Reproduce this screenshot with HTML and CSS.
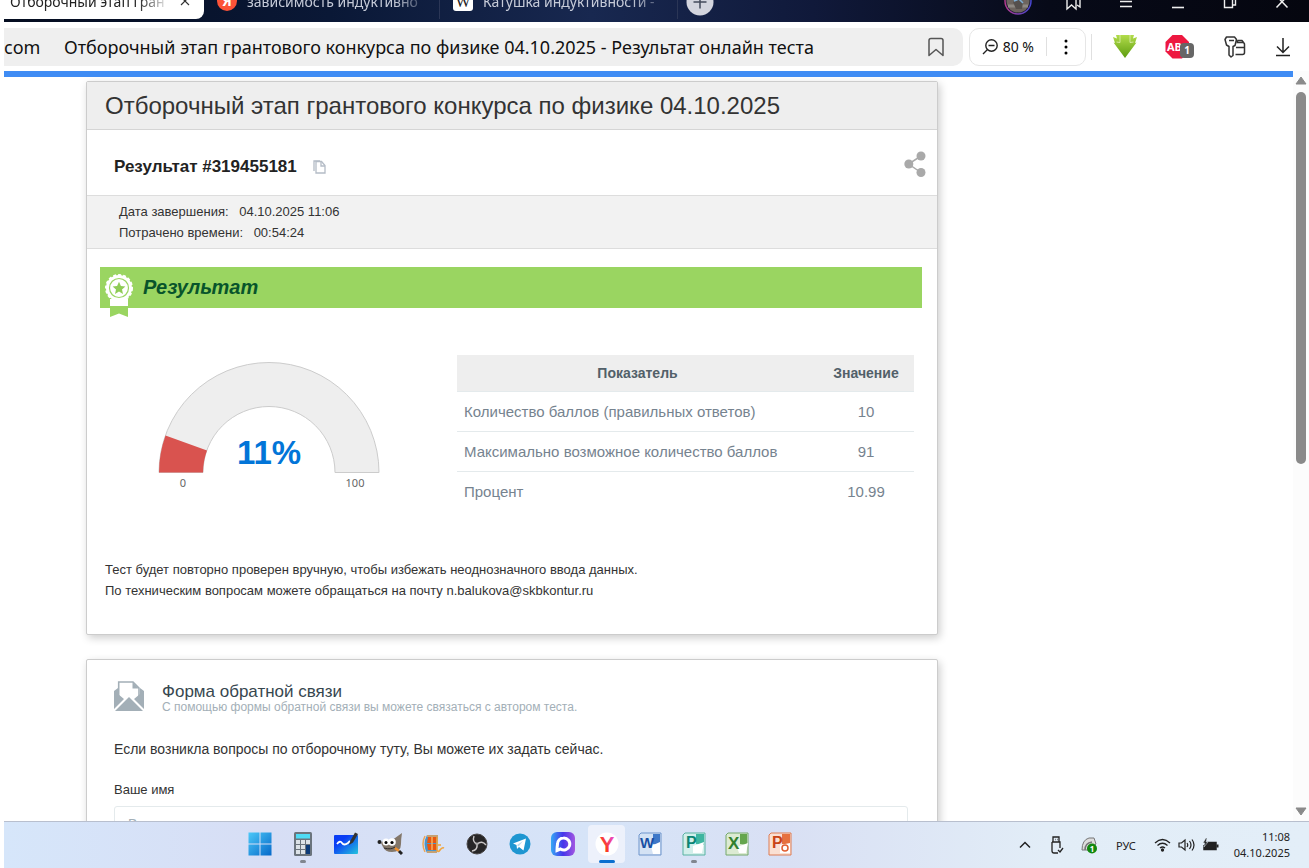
FILE: index.html
```html
<!DOCTYPE html>
<html lang="ru">
<head>
  <meta charset="UTF-8" />
  <meta name="viewport" content="width=device-width, initial-scale=1.0"/>
  <title>Отборочный этап грантового конкурса по физике 04.10.2025</title>
  <link rel="stylesheet" href="styles.css">
</head>
<body>
  <div class="screen">

    <!-- browser tabs -->
    <header class="tabs">
      <div class="tab active"><span class="tab-title">Отборочный этап гран</span>
        <button class="tab-close" aria-label="Закрыть вкладку"><svg width="10" height="10" viewBox="0 0 10 10"><path d="M1 1l8 8M9 1l-8 8" stroke="#333" stroke-width="1.2"/></svg></button>
      </div>
      <div class="tab second">
        <svg width="20" height="20" viewBox="0 0 20 20"><circle cx="10" cy="10" r="10" fill="#fc5338"/><text x="10" y="15" text-anchor="middle" font-size="14" font-weight="bold" fill="#fff">Я</text></svg>
        <span class="tab-title">зависимость индуктивно</span>
      </div>
      <div class="tab third">
        <svg width="20" height="20" viewBox="0 0 20 20"><rect width="20" height="20" rx="3" fill="#fff"/><text x="10" y="16" text-anchor="middle" font-size="16" font-family="Liberation Serif, serif" fill="#222">W</text></svg>
        <span class="tab-title">Катушка индуктивности -</span>
      </div>
      <button class="new-tab" aria-label="Новая вкладка"><svg width="28" height="28" viewBox="0 0 28 28"><circle cx="14" cy="14" r="13.500" fill="#d3d5de"/><path d="M14 7.500v13M7.500 14h13" stroke="#444b5c" stroke-width="1.500"/></svg></button>
      <div class="window-buttons">
        <button aria-label="Профиль"><svg width="28" height="28" viewBox="0 0 28 28"><defs><linearGradient id="ring" x1="0" x2="1"><stop offset="0" stop-color="#b13a8c"/><stop offset="1" stop-color="#4746d0"/></linearGradient></defs><circle cx="14" cy="14" r="13" fill="#15172a" stroke="url(#ring)" stroke-width="1.500"/><circle cx="14" cy="14" r="11.500" fill="#6d655f"/><path d="M4 9h20M4 19h20" stroke="#8e8983" stroke-width="3"/><path d="M9 15l5-3 5 3-1 7h-6" fill="#55504d"/><path d="M10 14l5-2 4 4" stroke="#7db0d8" stroke-width="1.500" fill="none"/></svg></button>
        <button aria-label="Коллекции"><svg width="20" height="20" viewBox="0 0 20 20" fill="none" stroke="#eee" stroke-width="1.400"><path d="M3 3h9v15l-4.500-4L3 18z"/><path d="M12 2h4v14l-3-2"/></svg></button>
        <button aria-label="Меню"><svg width="20" height="20" viewBox="0 0 20 20" stroke="#eee" stroke-width="1.400"><path d="M4 5.500h12M4 10.500h12M4 15.500h12"/></svg></button>
        <button aria-label="Свернуть"><svg width="20" height="20" viewBox="0 0 20 20" stroke="#eee" stroke-width="1.600"><path d="M4 16.500h12"/></svg></button>
        <button aria-label="Развернуть"><svg width="20" height="20" viewBox="0 0 20 20" fill="none" stroke="#eee" stroke-width="1.400"><path d="M4.500 7h8v9.500h-8z"/><path d="M7 4.500h8.500V14H13"/></svg></button>
        <button aria-label="Закрыть"><svg width="20" height="20" viewBox="0 0 20 20" stroke="#eee" stroke-width="1.500"><path d="M4.500 5l11 11.500M15.500 5l-11 11.500"/></svg></button>
      </div>
    </header>

    <!-- address bar -->
    <nav class="toolbar">
      <div class="address">
        <span class="host">com</span>
        <span class="page-name">Отборочный этап грантового конкурса по физике 04.10.2025 - Результат онлайн теста</span>
        <button class="bookmark" aria-label="Закладка"><svg width="18" height="20" viewBox="0 0 18 20"><path d="M4 1.500h10q2 0 2 2v15l-7-6-7 6v-15q0-2 2-2z" fill="none" stroke="#555" stroke-width="1.500" stroke-linejoin="round"/></svg></button>
      </div>
      <div class="zoom-box">
        <button class="zoom-level"><svg width="16" height="16" viewBox="0 0 16 16" fill="none" stroke="#222" stroke-width="1.400"><circle cx="9.500" cy="6.500" r="5.700"/><path d="M5.500 10.500L1 15M6.500 6.500h6"/></svg>80 %</button>
        <button class="dots" aria-label="Ещё"><svg width="4" height="16" viewBox="0 0 4 16"><circle cx="2" cy="2" r="1.500"/><circle cx="2" cy="8" r="1.500"/><circle cx="2" cy="14" r="1.500"/></svg></button>
      </div>
      <div class="extensions">
        <button aria-label="Загрузчик"><svg width="24" height="26" viewBox="0 0 24 26"><defs><linearGradient id="green" x1="0" x2="0" y1="0" y2="1"><stop offset="0" stop-color="#b2dc4a"/><stop offset="1" stop-color="#5d9c10"/></linearGradient></defs><path d="M3 1h18l-1 3.500L24 3l-2 6 1.500-.5L12 24 .5 8.500 2 9 0 3l4 1.500z" fill="url(#green)"/><path d="M7 1v7.500L3.500 8M17 1v7.500l3.500-.5" fill="none" stroke="#dff0b8" stroke-width=".8"/></svg></button>
        <button aria-label="Блокировщик"><svg width="30" height="26" viewBox="0 0 30 26"><path d="M7.500 1h9.500l7 7v9.500l-7 7H7.500l-7-7V8z" fill="#ed1840"/><text x="2" y="17" font-size="11" font-weight="bold" fill="#fff">AB</text><rect x="15" y="9" width="14" height="15" rx="4" fill="#666"/><text x="22" y="20" text-anchor="middle" font-size="10" font-weight="bold" fill="#fff">1</text></svg></button>
        <button aria-label="Пароли"><svg width="22" height="22" viewBox="0 0 22 22" fill="none" stroke="#333" stroke-width="1.500" stroke-linejoin="round"><path d="M2.500 1h8l2 2.500-1.500 6-2 1v9l-2 1.500-2-2v-8.500L2.500 9 1 3.500z"/><path d="M5 4.500h5" /><path d="M12.500 6.500h6q2 0 2 2v8q0 2-2 2h-7M12 11.500h8.500M12.500 6.500l1.500-2h4l1.500 2"/></svg></button>
        <button aria-label="Загрузки"><svg width="18" height="20" viewBox="0 0 18 20" fill="none" stroke="#222" stroke-width="1.500"><path d="M9 1v14M3 9.500l6 6 6-6M2 18.500h14"/></svg></button>
      </div>
    </nav>

    <div class="viewport">
      <main class="page">
        <section class="card">
          <h1>Отборочный этап грантового конкурса по физике 04.10.2025</h1>
          <div class="result-head">
            <h2>Результат #319455181</h2>
            <button aria-label="Скопировать"><svg width="13" height="14" viewBox="0 0 13 14" fill="none" stroke="#b4bcc6" stroke-width="1.300"><path d="M1 11V1h6"/><path d="M3 1.500h5.500l3.500 4v7.500H3z"/><path d="M8 1.500v4.500h4"/></svg></button>
            <button class="share" aria-label="Поделиться"><svg width="22" height="26" viewBox="0 0 22 26"><path d="M17 5L4.500 13 17 21.500" fill="none" stroke="#aaa" stroke-width="1.500"/><g fill="#a9a9a9"><circle cx="17" cy="5" r="4.500"/><circle cx="4.800" cy="13" r="4.500"/><circle cx="17" cy="21.500" r="4.500"/></g></svg></button>
          </div>
          <div class="meta">
            <div>Дата завершения: <span>04.10.2025 11:06</span></div>
            <div>Потрачено времени: <span>00:54:24</span></div>
          </div>

          <div class="banner">
            <svg class="medal" width="28" height="44" viewBox="0 0 28 44">
              <path d="M5 25h18v7H5z" fill="#fff"/>
              <path d="M5 34h18v9l-9-3.500L5 43z" fill="#9ad561"/>
              <circle cx="14" cy="14" r="13" fill="#fff"/>
              <circle cx="14" cy="14" r="13" fill="none" stroke="#fff" stroke-width="2" stroke-dasharray="3 2"/>
              <circle cx="14" cy="14" r="9.500" fill="none" stroke="#9ad561" stroke-width="1.200"/>
              <path d="M14 7.800l1.900 4.100 4.500.5-3.400 3 1 4.500-4-2.300-4 2.300 1-4.500-3.400-3 4.500-.5z" fill="#8fcc55"/>
            </svg>
            <h3>Результат</h3>
          </div>

          <div class="summary">
            <svg class="gauge" width="222" height="130" viewBox="0 0 222 130">
              <path d="M1 110.500A110 110 0 0 1 221 110.500H177A66 66 0 0 0 45 110.500z" fill="#eee" stroke="#ccc"/>
              <path d="M1 110.500A110 110 0 0 1 7.500 73.500L49 88.400A66 66 0 0 0 45 110.500z" fill="#d9534f"/>
              <text class="gauge-value" x="111" y="102" text-anchor="middle">11%</text>
              <text class="gauge-label" x="25" y="125" text-anchor="middle">0</text>
              <text class="gauge-label" x="197" y="125" text-anchor="middle">100</text>
            </svg>
            <table>
              <thead>
                <tr><th>Показатель</th><th class="value">Значение</th></tr>
              </thead>
              <tbody>
                <tr><td>Количество баллов (правильных ответов)</td><td class="value">10</td></tr>
                <tr><td>Максимально возможное количество баллов</td><td class="value">91</td></tr>
                <tr><td>Процент</td><td class="value">10.99</td></tr>
              </tbody>
            </table>
          </div>

          <p class="note">Тест будет повторно проверен вручную, чтобы избежать неоднозначного ввода данных.<br>
          По техническим вопросам можете обращаться на почту n.balukova@skbkontur.ru</p>
        </section>

        <section class="card feedback">
          <div class="feedback-head">
            <svg width="30" height="30" viewBox="0 0 30 30" fill="#a3afb7"><path d="M0 10l4-3v6l6 5L0 28zM30 10l-4-3v6l-6 5 10 10z"/><path d="M1 30l14-14 14 14z"/><path d="M4.700 15V1H19l6 6v8" fill="none" stroke="#a3afb7" stroke-width="1.600"/><path d="M18.500 1v6.500H25z"/></svg>
            <div>
              <h2>Форма обратной связи</h2>
              <p>С помощью формы обратной связи вы можете связаться с автором теста.</p>
            </div>
          </div>
          <p class="question">Если возникла вопросы по отборочному туту, Вы можете их задать сейчас.</p>
          <label for="name">Ваше имя</label>
          <input id="name" type="text" placeholder="Ваше имя">
        </section>
      </main>
      <div class="scrollbar">
        <svg width="12" height="9" viewBox="0 0 12 9"><path d="M6 1l5 7H1z" fill="#8a8a8a" stroke="#8a8a8a" stroke-linejoin="round"/></svg>
        <div class="track"><div class="thumb"></div></div>
        <svg width="12" height="9" viewBox="0 0 12 9"><path d="M6 8L1 1h10z" fill="#8a8a8a" stroke="#8a8a8a" stroke-linejoin="round"/></svg>
      </div>
    </div>

    <!-- windows taskbar -->
    <footer class="taskbar">
      <div class="apps">
        <button aria-label="Пуск"><svg width="24" height="24" viewBox="0 0 24 24"><defs><linearGradient id="win" x1="0" y1="0" x2="1" y2="1"><stop offset="0" stop-color="#4cc8f8"/><stop offset="1" stop-color="#0669c9"/></linearGradient></defs><path d="M.5.5h11v11H.5zM12.500.5h11v11h-11zM.5 12.500h11v11H.5zM12.500 12.500h11v11h-11z" fill="url(#win)"/></svg></button>
        <button class="running" aria-label="Калькулятор"><svg width="24" height="24" viewBox="0 0 24 24"><rect x="3" y="0" width="18" height="24" rx="1.500" fill="#6b747d"/><rect x="5" y="2" width="14" height="4.500" fill="#4fdcf5"/><g fill="#dce2e7"><path d="M5 8h4v4H5zM10 8h4v4h-4zM15 8h4v4h-4zM5 13h4v4H5zM10 13h4v4h-4zM5 18h4v4H5zM10 18h4v4h-4z"/></g><path d="M15 13h4v9h-4z" fill="#0d3b78"/></svg></button>
        <button aria-label="Доска"><svg width="26" height="24" viewBox="0 0 26 24"><defs><linearGradient id="board" x1="0" y1="0" x2="1" y2="1"><stop offset=".3" stop-color="#0a3df5"/><stop offset="1" stop-color="#24c4dd"/></linearGradient></defs><rect x="1" y="3" width="24" height="19" rx="1" fill="url(#board)"/><path d="M4 12q3-4 5-1t6 0l2-2" fill="none" stroke="#fff" stroke-width="1.800"/><path d="M16 13l1.500-4.500L22 .5l3 1.500-5 8.500z" fill="#333"/></svg></button>
        <button aria-label="GIMP"><svg width="26" height="24" viewBox="0 0 26 24"><path d="M4 11l2-2 5 1q3-1 7-4l7-5q-1 6-1 11 0 8-9 8-7 0-9-5z" fill="#83776a"/><circle cx="2.500" cy="10" r="2" fill="#222"/><circle cx="9" cy="10" r="3.500" fill="#fff"/><circle cx="15" cy="10" r="3.800" fill="#fff"/><circle cx="9" cy="10.500" r="1.500"/><circle cx="15" cy="10.500" r="1.600"/><path d="M7 16q7 2 11-1" stroke="#332e2b" fill="none"/><path d="M18 16l4 3" stroke="#f0902c" stroke-width="2.500"/><path d="M22 19l3 3" stroke="#222" stroke-width="3"/></svg></button>
        <button aria-label="Видео"><svg width="24" height="24" viewBox="0 0 24 24"><path d="M6 3h11l-1 18H6Q1 12 6 3z" fill="#4b95c9"/><path d="M4 4q-4 8 0 16M6 4h11M6 20h10" stroke="#efa556" stroke-width="1.500" fill="none"/><path d="M7 5h9l-1 6H6zM6 12h9l1 6H7z" fill="#e8560f"/><path d="M11 5v13" stroke="#f7b060" stroke-width="1.500"/><path d="M16 5v13q1 3 3 0t4-2M17 13h3" fill="none" stroke="#f1a43a" stroke-width="1.600"/></svg></button>
        <button aria-label="OBS"><svg width="22" height="22" viewBox="0 0 22 22"><circle cx="11" cy="11" r="10" fill="#272627" stroke="#4b4848"/><g fill="none" stroke="#c9c6c6" stroke-width="1.400"><path d="M11 11Q6 9 8 3M11 11q5-4 9 1M11 11q1 6-5 7"/></g><circle cx="11" cy="11" r="1.500" fill="#aaa"/></svg></button>
        <button aria-label="Telegram"><svg width="22" height="22" viewBox="0 0 22 22"><circle cx="11" cy="11" r="10.500" fill="#1e96d1"/><path d="M4 10.500L17 5.500l-2.500 12-4.500-3.500-2 2-.5-4z" fill="#fff"/><path d="M8 12l6-4-4.500 5.500" fill="#b9dcef"/></svg></button>
        <button aria-label="Max"><svg width="24" height="24" viewBox="0 0 24 24"><defs><linearGradient id="max" x1="0" x2="1"><stop offset="0" stop-color="#35a8f5"/><stop offset=".5" stop-color="#4535ea"/><stop offset="1" stop-color="#a357e1"/></linearGradient></defs><rect width="24" height="24" rx="6" fill="url(#max)"/><path d="M12.500 6a6 6 0 1 1-3 11l-3.500 1.500q0-3 .5-6.500a6 6 0 0 1 6-6z" fill="none" stroke="#fff" stroke-width="3"/></svg></button>
        <button class="current" aria-label="Яндекс Браузер"><svg width="24" height="24" viewBox="0 0 24 24"><defs><linearGradient id="yb" x1="0" x2="1" y1="1" y2="0"><stop offset=".4" stop-color="#fb3b25"/><stop offset=".9" stop-color="#e64be0"/></linearGradient></defs><circle cx="12" cy="12" r="11.500" fill="#fff"/><text x="12" y="20" text-anchor="middle" font-size="22" font-weight="bold" fill="url(#yb)">Y</text></svg></button>
        <button aria-label="Word"><svg width="24" height="24" viewBox="0 0 24 24"><path d="M3 1h20v22H1V3z" fill="#d4e2f4" stroke="#6f95cc"/><path d="M15 2h7v11l-7-1z" fill="#3f78c8"/><path d="M13 14l9-4v12h-7z" fill="#fff"/><text x="2" y="16" font-size="15" font-weight="bold" fill="#184fa3">W</text></svg></button>
        <button class="running" aria-label="Publisher"><svg width="24" height="24" viewBox="0 0 24 24"><path d="M3 1h20v22H1V3z" fill="#d3efeb" stroke="#59b3a3"/><path d="M14 2h8v11l-8-1z" fill="#3eb5a0"/><path d="M11 14l11-4-2 11h-9z" fill="#fff"/><text x="4" y="16" font-size="16" font-weight="bold" fill="#0b8574">P</text></svg></button>
        <button aria-label="Excel"><svg width="24" height="24" viewBox="0 0 24 24"><path d="M3 1h20v22H1V3z" fill="#dcebd3" stroke="#74a86c"/><path d="M15 2h7v11l-7-1z" fill="#65a64e"/><path d="M12 15l11-4-2 10h-7z" fill="#fff"/><text x="3" y="17" font-size="17" font-weight="bold" fill="#31802d">X</text></svg></button>
        <button aria-label="PowerPoint"><svg width="24" height="24" viewBox="0 0 24 24"><path d="M3 1h20v22H1V3z" fill="#fae0d3" stroke="#dd7c55"/><path d="M14 2h8v11l-8-1z" fill="#e6713f"/><path d="M12 13l10-2v10H12z" fill="#fff"/><circle cx="17" cy="16" r="3" fill="none" stroke="#e05f32" stroke-width="1.500"/><text x="4" y="16" font-size="16" font-weight="bold" fill="#c84415">P</text></svg></button>
      </div>
      <div class="tray">
        <button class="chevron" aria-label="Скрытые значки"><svg width="12" height="8" viewBox="0 0 12 8"><path d="M1 6.500l5-5 5 5" fill="none" stroke="#222" stroke-width="1.500"/></svg></button>
        <svg class="usb" width="14" height="18" viewBox="0 0 14 18" fill="none" stroke="#222" stroke-width="1.300"><path d="M3 6V1h6v5M2 6h8v6M8 17H4q-2 0-2-2V6"/><path d="M5 3.500h.5M7 3.500h.5M8 14l2 2 3-4"/></svg>
        <svg width="17" height="17" viewBox="0 0 17 17"><path d="M1 13Q1 3 8 1h5l2 6-7 6z" fill="#ddd" stroke="#777"/><path d="M4 13q0-7 7-8" stroke="#777" fill="none" stroke-width="1.500"/><circle cx="11" cy="11.500" r="5" fill="#11880e"/><text x="11" y="15" text-anchor="middle" font-size="8" font-weight="bold" fill="#fff">1</text></svg>
        <span class="lang">РУС</span>
        <svg width="17" height="14" viewBox="0 0 17 14" fill="none" stroke="#222" stroke-width="1.300"><path d="M1 5q7.500-7 15 0M3.500 7.500q5-4.500 10 0M6 10q2.500-2 5 0"/><circle cx="8.500" cy="12" r="1" fill="#222"/></svg>
        <svg width="17" height="14" viewBox="0 0 17 14" fill="none" stroke="#222" stroke-width="1.200"><path d="M1 5h2.500L7 2v10L3.500 9H1zM9 5q1.500 2 0 4M11.500 3q3 4 0 8M14 1.500q4 5.500 0 11"/></svg>
        <svg width="17" height="14" viewBox="0 0 17 14"><path d="M3 4.500h11v7H2V7" fill="#222" stroke="#222" stroke-width="1.500"/><path d="M15.500 6.500v3" stroke="#222" stroke-width="2"/><path d="M4 0L1 5h2L2 9l4-5H4l1-4z" fill="#222" stroke="#e3edf7" stroke-width=".5"/></svg>
        <div class="clock">11:08<br>04.10.2025</div>
      </div>
    </footer>
  </div>
</body>
</html>
```
FILE: styles.css
```css
* {
  box-sizing: border-box;
}
body {
  margin: 0;
  font-family: "Liberation Sans", Arial, sans-serif;
  color: #333;
  background: #fff;
}
h1, h2, h3, p {
  margin: 0;
}
button {
  padding: 0;
  border: none;
  background: none;
  color: inherit;
  font: inherit;
  cursor: pointer;
}
svg {
  display: block;
  flex: none;
}
.screen {
  display: flex;
  flex-direction: column;
  height: 100vh;
  padding-left: 4px;
  overflow: hidden;
}

/* tabs */
.tabs {
  display: flex;
  align-items: flex-end;
  flex: none;
  height: 22px;
  padding-bottom: 3px;
  overflow: hidden;
  background: linear-gradient(90deg, #050d20, #0a1836 25%, #182850 45%, #10193a 62%, #070a18 80%, #05060f);
  font-family: "Noto Sans", sans-serif;
  font-size: 14px;
}
.tab {
  display: flex;
  align-items: center;
  height: 36px;
  gap: 10px;
  color: #c6cbd8;
  white-space: nowrap;
}
.tab-title {
  flex: 1;
  overflow: hidden;
  mask-image: linear-gradient(90deg, #000 80%, transparent);
}
.tab.active {
  width: 200px;
  padding: 0 14px 0 6px;
  border-radius: 0 0 8px 0;
  background: #fff;
  color: #222;
}
.tab.second {
  width: 236px;
  padding: 0 8px 0 13px;
  border-right: 1px solid #2b3656;
}
.tab.third {
  width: 238px;
  padding: 0 8px 0 13px;
  border-right: 1px solid #2b3656;
}
.new-tab {
  margin: 0 0 3px 8px;
}
.window-buttons {
  display: flex;
  align-items: center;
  height: 36px;
  margin-left: auto;
  padding-right: 17px;
  gap: 32px;
}

/* toolbar */
.toolbar {
  display: flex;
  align-items: center;
  flex: none;
  height: 49px;
  padding: 0 17px 0 0;
  background: #fff;
  font-family: "Noto Sans", sans-serif;
  color: #111;
}
.address {
  display: flex;
  align-items: center;
  flex: 1;
  height: 38px;
  padding-right: 18px;
  border-radius: 0 10px 10px 0;
  background: #efefef;
  font-size: 18px;
  line-height: 36px;
  white-space: nowrap;
}
.host {
  width: 60px;
}
.bookmark {
  margin-left: auto;
}
.zoom-box {
  display: flex;
  align-items: center;
  height: 38px;
  margin-left: 6px;
  padding: 0 17px 0 12px;
  border: 1px solid #e6e6e6;
  border-radius: 10px;
  font-size: 14px;
}
.zoom-level {
  display: flex;
  align-items: center;
  gap: 5px;
  padding-right: 12px;
  border-right: 1px solid #e0e0e0;
}
.dots {
  margin-left: 17px;
}
.extensions {
  display: flex;
  align-items: center;
  justify-content: space-between;
  width: 201px;
  margin-left: 5px;
  padding-left: 21px;
  border-left: 1px solid #e0e0e0;
}

/* page */
.viewport {
  display: flex;
  flex: 1;
  min-height: 0;
}
.page {
  flex: 1;
  padding: 4px 16px 0 82px;
  border-top: 6px solid #3f8cf4;
  overflow: hidden;
}
.card {
  max-width: 852px;
  margin-bottom: 24px;
  border: 1px solid #ccc;
  border-radius: 2px;
  background: #fff;
  box-shadow: 2px 3px 9px rgba(0, 0, 0, 0.2);
}
.card h1 {
  height: 48px;
  padding-left: 18px;
  border-bottom: 1px solid #d5d5d5;
  background: #eee;
  font-size: 24px;
  font-weight: normal;
  line-height: 47px;
}
.result-head {
  display: flex;
  align-items: center;
  height: 65px;
  padding: 8px 11px 0 27px;
  gap: 16px;
}
.result-head h2 {
  color: #222;
  font-size: 17px;
}
.share {
  margin: 0 0 6px auto;
}
.meta {
  padding: 5px 32px;
  border-top: 1px solid #ddd;
  border-bottom: 1px solid #ddd;
  background: #f2f2f2;
  font-size: 13px;
  line-height: 21px;
}
.meta span {
  margin-left: 7px;
}
.banner {
  position: relative;
  height: 41px;
  margin: 18px 15px 0 13px;
  padding-left: 43px;
  background: #9ad561;
}
.banner h3 {
  color: #08542b;
  font-size: 20px;
  font-style: italic;
  line-height: 40px;
}
.medal {
  position: absolute;
  top: 7px;
  left: 5px;
}
.summary {
  display: flex;
  align-items: flex-start;
  margin: 47px 23px 0 71px;
  gap: 77px;
}
.gauge {
  margin-top: 7px;
}
.gauge-value {
  fill: #0275d8;
  font-size: 33px;
  font-weight: bold;
}
.gauge-label {
  fill: #666;
  font-family: "Noto Sans", sans-serif;
  font-size: 11px;
}
table {
  flex: 1;
  border-collapse: collapse;
  color: #76838f;
  font-size: 15px;
}
th {
  height: 36px;
  padding: 0;
  background: #eee;
  color: #526069;
  font-size: 14px;
}
td {
  height: 40px;
  padding: 0 7px;
  border-top: 1px solid #e4eaec;
}
.value {
  width: 96px;
  text-align: center;
}
.note {
  margin: 48px 18px 33px;
  font-size: 13px;
  line-height: 21px;
}

/* feedback form */
.feedback {
  padding: 21px 29px 24px 27px;
}
.feedback-head {
  display: flex;
  gap: 18px;
}
.feedback-head h2 {
  margin-top: 2px;
  color: #37474f;
  font-size: 17px;
  font-weight: normal;
  line-height: 18px;
}
.feedback-head p {
  color: #a3afb7;
  font-size: 12px;
  line-height: 12px;
}
.question {
  margin-top: 24px;
  font-size: 14px;
  line-height: 24px;
}
.feedback label {
  display: block;
  margin: 19px 0 6px;
  font-size: 13px;
  line-height: 20px;
}
.feedback input {
  width: 100%;
  height: 36px;
  padding: 0 13px;
  border: 1px solid #e4eaec;
  border-radius: 3px;
  font: inherit;
  font-size: 14px;
}
.feedback input::placeholder {
  color: #a3afb7;
}
.scrollbar {
  display: flex;
  flex-direction: column;
  align-items: center;
  width: 16px;
  padding: 5px 0;
  background: #fcfcfc;
}
.track {
  flex: 1;
  padding-top: 7px;
}
.thumb {
  width: 10px;
  height: 52%;
  border-radius: 5px;
  background: #8a8a8a;
}

/* taskbar */
.taskbar {
  display: flex;
  align-items: center;
  justify-content: space-between;
  flex: none;
  height: 47px;
  padding: 0 19px 0 234px;
  border-top: 1px solid #b8bfce;
  background: linear-gradient(90deg, #d6e6fa, #d7def5 20%, #d6e4f8 45%, #d9e0f4 60%, #e2edf7 80%, #e3eef8);
}
.apps {
  display: grid;
  grid-template-columns: repeat(13, 1fr);
  width: 564px;
  height: 46px;
}
.apps button {
  position: relative;
  display: flex;
  align-items: center;
  justify-content: center;
  height: 38px;
  margin: 3px;
  border-radius: 4px;
}
.apps .current {
  background: #edf1fb;
}
.running::after, .current::after {
  content: "";
  position: absolute;
  bottom: 0;
  left: 50%;
  width: 6px;
  height: 3px;
  margin-left: -3px;
  border-radius: 2px;
  background: #80868f;
}
.current::after {
  width: 16px;
  margin-left: -8px;
  background: #0b6fcf;
}
.tray {
  display: flex;
  align-items: center;
  gap: 7px;
  color: #222;
  font-family: "Noto Sans", sans-serif;
  font-size: 11px;
}
.tray .chevron {
  margin-right: 12px;
}
.usb {
  margin-right: 10px;
}
.lang {
  margin: 0 11px;
}
.clock {
  margin-left: 8px;
  line-height: 16px;
  text-align: right;
}
```
